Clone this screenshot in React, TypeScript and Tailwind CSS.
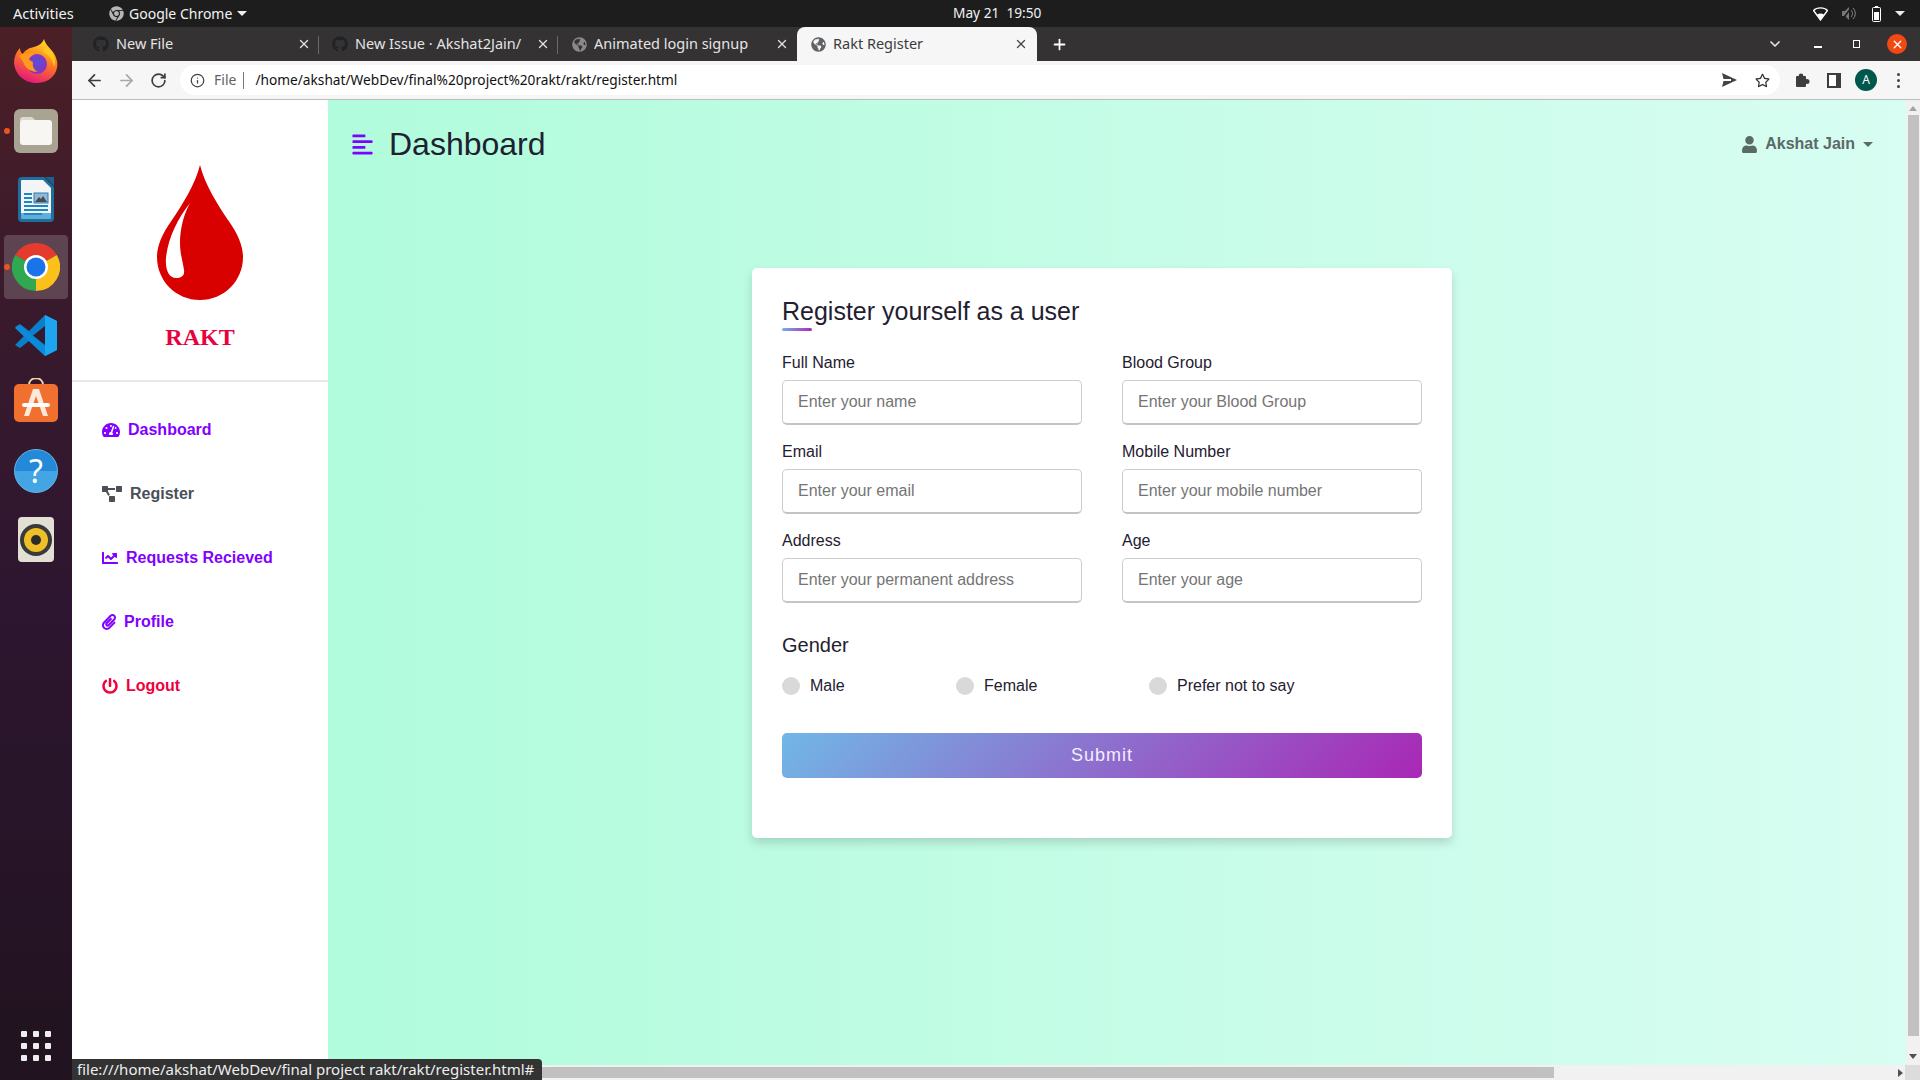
import React from "react";
import {
  FaTachometerAlt, FaProjectDiagram, FaChartLine, FaPaperclip, FaPowerOff, FaUser, FaAlignLeft,
  FaGithub, FaGlobeAmericas, FaChrome, FaRegStar,
} from "react-icons/fa";
import { ArrowLeft, ArrowRight, RotateCw, X, Plus, ChevronDown, Info } from "lucide-react";

const ui = "font-['Noto_Sans',sans-serif]";

function Firefox() {
  return (
    <svg width="46" height="46" viewBox="0 0 46 46">
      <defs>
        <linearGradient id="ff1" x1="0.7" y1="0" x2="0.3" y2="1">
          <stop offset="0" stopColor="#ffe226" />
          <stop offset="0.45" stopColor="#ff7a1f" />
          <stop offset="1" stopColor="#e3127e" />
        </linearGradient>
        <radialGradient id="ff2" cx="0.5" cy="0.4" r="0.6">
          <stop offset="0" stopColor="#5a4fd6" />
          <stop offset="1" stopColor="#8c2fc0" />
        </radialGradient>
      </defs>
      <path d="M31 1c1 5 5 8 9 13 4 6 5 11 4 16-2 9-10 15-21 15C11 45 2 36 1 25c0-6 2-11 6-15 0 3 1 5 3 6 2-4 6-6 11-7 4-1 8-3 10-8z" fill="url(#ff1)" />
      <circle cx="24" cy="26" r="10" fill="url(#ff2)" />
      <path d="M6 18c5-4 11-4 16-2-3 1-5 3-6 5 1 2 3 2 4 3-1 4 1 8 5 10-6 0-12-3-14-8-1-3-3-5-5-8z" fill="#ff9a1f" />
      <path d="M31 1c1 5 5 9 8 13 3 5 4 10 2 15-1-7-5-12-11-15 2-4 2-8 1-13z" fill="#ffc61e" />
    </svg>
  );
}

function Files() {
  return (
    <div className="w-[44px] h-[44px] rounded-[6px] bg-[#a9a391] flex items-center justify-center">
      <svg width="32" height="28" viewBox="0 0 32 28">
        <path d="M0 3a3 3 0 0 1 3-3h9l4 4H0z" fill="#dcd9cf" />
        <rect x="0" y="3" width="32" height="25" rx="3" fill="#f7f6f3" />
      </svg>
    </div>
  );
}

function Writer() {
  return (
    <svg width="36" height="45" viewBox="0 0 36 45">
      <path d="M4 0h22l10 10v31a4 4 0 0 1-4 4H4a4 4 0 0 1-4-4V4a4 4 0 0 1 4-4z" fill="#1f6f9e" />
      <path d="M3 4a1 1 0 0 1 1-1h21l8 8v26H3z" fill="#f2f4f6" />
      <path d="M3 36h30v5a1 1 0 0 1-1 1H4a1 1 0 0 1-1-1z" fill="#5fb0d8" />
      <path d="M27 0l9 0v9z" fill="#18628e" />
      <rect x="6" y="16" width="8" height="2" fill="#1b86c4" />
      <rect x="6" y="20" width="8" height="2" fill="#1b86c4" />
      <rect x="6" y="24" width="8" height="2" fill="#1b86c4" />
      <rect x="6" y="28" width="24" height="2" fill="#1b86c4" />
      <rect x="6" y="32" width="24" height="2" fill="#1b86c4" />
      <rect x="6" y="36" width="18" height="2" fill="#1b86c4" />
      <rect x="16" y="16" width="14" height="10" fill="#8fb8d6" stroke="#2a7fb0" />
      <path d="M17 25l4-5 2 2 2-3 4 6z" fill="#4a4a4a" />
    </svg>
  );
}

function Chrome() {
  return (
    <svg width="48" height="48" viewBox="0 0 48 48">
      <path d="M24 24L44.8 12A24 24 0 0 0 3.2 12z" fill="#e33b2e" />
      <path d="M24 24L3.2 12A24 24 0 0 0 24 48z" fill="#2fa84f" />
      <path d="M24 24L24 48A24 24 0 0 0 44.8 12z" fill="#fcc01a" />
      <circle cx="24" cy="24" r="12" fill="#fff" />
      <circle cx="24" cy="24" r="9.5" fill="#1a73e8" />
    </svg>
  );
}

function VSCode() {
  return (
    <svg width="44" height="43" viewBox="0 0 44 43">
      <path d="M31 1l12 6v29l-12 6-16-15-9 7-5-3 9-9-9-9 5-3 9 7z" fill="#0b7fcb" />
      <path d="M31 1l12 6v29l-12 6z" fill="#1ea5ef" />
      <path d="M31 12L19 21.500 31 31z" fill="#331a30" />
      <path d="M1 14l5-3 25 21v10z" fill="#0a8ad8" />
    </svg>
  );
}

function Store() {
  return (
    <svg width="44" height="44" viewBox="0 0 44 44">
      <path d="M15 7c0-9 14-9 14 0" fill="none" stroke="#f4d3a8" strokeWidth="2" />
      <rect x="0" y="6" width="44" height="38" rx="5" fill="#f1702f" />
      <path d="M19 11h6l9 27h-5l-7-20-7 20h-5z" fill="#fde9dc" />
      <rect x="8" y="25" width="28" height="4" rx="2" fill="#fff" />
    </svg>
  );
}

function Help() {
  return (
    <div className="w-[44px] h-[44px] rounded-full bg-[linear-gradient(#2389d8_50%,#43a5e3_50%)] border border-[#63b6ea] flex items-center justify-center text-white text-[32px] leading-none font-['Noto_Sans',sans-serif]">
      ?
    </div>
  );
}

function Rhythmbox() {
  return (
    <div className="w-[36px] h-[45px] rounded-[4px] bg-[#e2dfd5] flex items-center justify-center">
      <svg width="32" height="32" viewBox="0 0 32 32">
        <circle cx="16" cy="16" r="16" fill="#3a3a3a" />
        <circle cx="16" cy="16" r="12" fill="#eebf26" />
        <circle cx="16" cy="16" r="5" fill="#2c2c2c" />
      </svg>
    </div>
  );
}

function Dock() {
  return (
    <div className="w-[72px] shrink-0 flex flex-col items-center bg-[linear-gradient(#4c1f26_0%,#3a1a2c_25%,#2d1630_55%,#21131f_100%)] relative">
      <div className="h-[58px] mt-[5px] flex items-center justify-center"><Firefox /></div>
      <div className="h-[44px] mt-[19px] flex items-center justify-center"><Files /></div>
      <div className="h-[45px] mt-[24px] flex items-center justify-center"><Writer /></div>
      <div className="w-[64px] h-[64px] mt-[13px] rounded-[4px] bg-[#5e4450] flex items-center justify-center"><Chrome /></div>
      <div className="h-[43px] mt-[15px] flex items-center justify-center"><VSCode /></div>
      <div className="h-[44px] mt-[21px] flex items-center justify-center"><Store /></div>
      <div className="h-[44px] mt-[27px] flex items-center justify-center"><Help /></div>
      <div className="h-[45px] mt-[24px] flex items-center justify-center"><Rhythmbox /></div>
      <span className="absolute left-[4px] top-[101px] w-[6px] h-[6px] rounded-full bg-[#e95420]" />
      <span className="absolute left-[4px] top-[237px] w-[6px] h-[6px] rounded-full bg-[#e95420]" />
      <div className="mt-auto mb-[19px] grid grid-cols-3 gap-x-[6px] gap-y-[6px]">
        {Array.from({ length: 9 }).map((_, i) => (
          <span key={i} className="w-[6px] h-[6px] rounded-[1px] bg-[#eeeeee]" />
        ))}
      </div>
    </div>
  );
}

function TopBar() {
  return (
    <div className={`${ui} h-[27px] shrink-0 bg-[#1d1d1d] flex items-center text-[14px] text-[#f2f2f2] relative`}>
      <span className="ml-[13px] w-[96px] text-[14.6px]">Activities</span>
      <FaChrome className="w-[15px] h-[15px] text-[#b5b5b5]" />
      <span className="ml-[5px]">Google Chrome</span>
      <span className="ml-[5px] w-0 h-0 border-x-[5px] border-x-transparent border-t-[5px] border-t-[#eee]" />
      <span className="absolute left-[953px] top-[3px] text-[13.7px]">May 21&nbsp;&nbsp;19:50</span>
      <div className="ml-auto mr-[15px] flex items-center">
        <svg width="15" height="15" viewBox="0 0 15 15">
          <path d="M0.500 4.500C4 1 11 1 14.500 4.500L7.500 14z" fill="none" stroke="#fff" strokeWidth="1.400" />
          <path d="M4 8.500C6 7 9 7 11 8.500L7.500 14z" fill="#fff" />
        </svg>
        <svg className="ml-[13px]" width="15" height="15" viewBox="0 0 15 15">
          <path d="M1 5h3l4-4v13l-4-4H1z" fill="#777" />
          <path d="M10 4c2 2 2 5 0 7M12 2c3 3 3 8 0 11" stroke="#888" fill="none" />
          <path d="M1 14L10 2" stroke="#1d1d1d" strokeWidth="1.500" />
        </svg>
        <svg className="ml-[16px]" width="9" height="16" viewBox="0 0 9 16">
          <rect x="0.500" y="1.500" width="8" height="14" rx="1" fill="none" stroke="#fff" />
          <rect x="3" y="0" width="3" height="2" fill="#fff" />
          <rect x="2" y="6" width="5" height="8" fill="#fff" />
        </svg>
        <span className="ml-[14px] w-0 h-0 border-x-[5px] border-x-transparent border-t-[5px] border-t-[#eee]" />
      </div>
    </div>
  );
}

function Tab({ title, icon, active, sep }: { title: string; icon: React.ReactNode; active?: boolean; sep?: boolean }) {
  return (
    <div className={`relative h-full flex items-center pl-[13px] text-[14.5px] ${active ? "w-[240px] pr-[9px] bg-[#f6f6f6] text-[#3c3c3c] rounded-t-[8px]" : "w-[239px] pr-[8px] text-[#e4e4e4]"}`}>
      <span className="w-[16px] h-[16px] flex items-center justify-center shrink-0">{icon}</span>
      <span className="ml-[7px] mt-[-1px] flex-1 overflow-hidden whitespace-nowrap">{title}</span>
      <X className={`ml-[6px] w-[14px] h-[14px] shrink-0 ${active ? "text-[#444]" : "text-[#e4e4e4]"}`} strokeWidth={2.200} />
      {sep && <span className="absolute right-0 top-[9px] h-[18px] w-px bg-[#6a6a6a]" />}
    </div>
  );
}

function TabStrip() {
  return (
    <div className={`${ui} h-[34px] shrink-0 bg-[#343233] flex items-stretch`}>
      <div className="w-[8px]" />
      <Tab title="New File" sep icon={<FaGithub className="w-[16px] h-[16px] text-[#202326]" />} />
      <Tab title="New Issue · Akshat2Jain/" sep icon={<FaGithub className="w-[16px] h-[16px] text-[#202326]" />} />
      <Tab title="Animated login signup" icon={<FaGlobeAmericas className="w-[15px] h-[15px] text-[#8a8a8a]" />} />
      <Tab title="Rakt Register" active icon={<FaGlobeAmericas className="w-[15px] h-[15px] text-[#5f6368]" />} />
      <div className="w-[44px] flex items-center justify-center">
        <Plus className="w-[17px] h-[17px] text-white" strokeWidth={2.500} />
      </div>
      <div className="ml-auto flex items-center text-[#e6e6e6]">
        <ChevronDown className="w-[16px] h-[16px]" strokeWidth={2.500} />
        <span className="ml-[31px] w-[8px] h-[2px] mt-[5px] bg-white" />
        <span className="ml-[31px] w-[7px] h-[8px] border border-white" />
        <span className="ml-[27px] mr-[13px] w-[20px] h-[20px] rounded-full bg-[#f04a12] flex items-center justify-center">
          <X className="w-[13px] h-[13px] text-white" strokeWidth={2.500} />
        </span>
      </div>
    </div>
  );
}

function Toolbar() {
  return (
    <div className={`${ui} h-[39px] shrink-0 bg-[#f6f6f6] border-b border-[#bdbdbd] flex items-center`}>
      <ArrowLeft className="ml-[13px] w-[19px] h-[19px] text-[#3d3d3d]" strokeWidth={2.200} />
      <ArrowRight className="ml-[13px] w-[19px] h-[19px] text-[#a8a8a8]" strokeWidth={2.200} />
      <RotateCw className="ml-[14px] w-[17px] h-[17px] text-[#3d3d3d]" strokeWidth={2.400} />
      <div className="ml-[13px] w-[1600px] h-[30px] rounded-full bg-white flex items-center pl-[10px]">
        <Info className="w-[15px] h-[15px] text-[#444]" />
        <span className="ml-[9px] mt-[-1px] text-[14px] text-[#5f6368]">File</span>
        <span className="ml-[7px] w-px h-[17px] bg-[#777]" />
        <span className="ml-[11px] text-[13.7px] text-[#111]">/home/akshat/WebDev/final%20project%20rakt/rakt/register.html</span>
        <svg className="ml-auto" width="15" height="14" viewBox="0 0 15 14">
          <path d="M0 0l15 7-15 7 1.500-6H9V6H1.500z" fill="#444" />
        </svg>
        <FaRegStar className="ml-[18px] mr-[10px] w-[15px] h-[15px] text-[#333]" />
      </div>
      <svg className="ml-[15px]" width="15" height="15" viewBox="0 0 15 15">
        <rect x="1" y="3" width="10" height="11" rx="1" fill="#3d3d3d" />
        <circle cx="6" cy="2.800" r="2.300" fill="#3d3d3d" />
        <circle cx="12" cy="8.500" r="2.500" fill="#3d3d3d" />
      </svg>
      <svg className="ml-[17px]" width="14" height="15" viewBox="0 0 14 15">
        <rect x="1" y="1" width="12" height="13" fill="#fff" stroke="#3d3d3d" strokeWidth="2" />
        <rect x="9" y="1" width="5" height="13" fill="#3d3d3d" />
      </svg>
      <span className="ml-[14px] w-[22px] h-[22px] rounded-full bg-[#00574b] text-white text-[12px] flex items-center justify-center">A</span>
      <div className="ml-[20px] flex flex-col gap-[3px]">
        <span className="w-[3px] h-[3px] rounded-full bg-[#444]" />
        <span className="w-[3px] h-[3px] rounded-full bg-[#444]" />
        <span className="w-[3px] h-[3px] rounded-full bg-[#444]" />
      </div>
    </div>
  );
}

function Drop() {
  return (
    <svg width="86" height="135" viewBox="157 165 86 135">
      <path d="M200 165C205 185 218 205 228 220C238 234 243 246 243 257C243 281 224 300 200 300C176 300 157 281 157 257C157 246 162 234 172 220C182 205 195 185 200 165Z" fill="#d90000" />
      <path d="M190 203C178 218 168 238 166 258C165 270 169 278 176 278C181 278 185 276 184 270C183 262 180 254 180 243C180 228 184 214 190 203Z" fill="#fff" />
    </svg>
  );
}

function NavItem({ icon, label, color, gap }: { icon: React.ReactNode; label: string; color: string; gap: string }) {
  return (
    <div className={`h-[64px] pl-[30px] flex items-center font-bold text-[16px] ${color} ${gap}`}>
      {icon}
      <span>{label}</span>
    </div>
  );
}

function Sidebar() {
  return (
    <div className="w-[256px] shrink-0 bg-white flex flex-col">
      <div className="h-[282px] shrink-0 border-b-2 border-[#e7e7e7] flex flex-col items-center pt-[65px]">
        <Drop />
        <div className="mt-[22px] font-['Liberation_Serif',serif] font-bold text-[24px] leading-[30px] text-[#e8003f]">RAKT</div>
      </div>
      <div className="pt-[16px] flex flex-col font-['Liberation_Sans',sans-serif]">
        <NavItem color="text-[#8200ff]" gap="gap-[8px]" label="Dashboard" icon={<FaTachometerAlt className="w-[18px] h-[16px]" />} />
        <NavItem color="text-[#495057]" gap="gap-[8px]" label="Register" icon={<FaProjectDiagram className="w-[20px] h-[16px]" />} />
        <NavItem color="text-[#8200ff]" gap="gap-[8px]" label="Requests Recieved" icon={<FaChartLine className="w-[16px] h-[16px]" />} />
        <NavItem color="text-[#8200ff]" gap="gap-[8px]" label="Profile" icon={<FaPaperclip className="w-[14px] h-[16px]" />} />
        <NavItem color="text-[#f0003c]" gap="gap-[8px]" label="Logout" icon={<FaPowerOff className="w-[16px] h-[16px]" />} />
      </div>
    </div>
  );
}

function Field({ label, placeholder }: { label: string; placeholder: string }) {
  return (
    <div className="w-[300px] flex flex-col">
      <label className="h-[24px] mb-[6px] pt-[1px] text-[16px] leading-[24px] text-[#1f2030]">{label}</label>
      <input
        readOnly
        placeholder={placeholder}
        className="h-[45px] w-full rounded-[5px] border border-[#cccccc] border-b-2 border-b-[#c4c4c4] bg-white pl-[15px] text-[16px] placeholder:text-[#757575] outline-none"
      />
    </div>
  );
}

function Radio({ label, width }: { label: string; width: string }) {
  return (
    <div className={`flex items-center ${width}`}>
      <span className="w-[18px] h-[18px] rounded-full bg-[#d9d9d9]" />
      <span className="ml-[10px] text-[16px] text-[#1f2030]">{label}</span>
    </div>
  );
}

function Card() {
  return (
    <div className="ml-[424px] mt-[80px] w-[700px] h-[570px] shrink-0 rounded-[5px] bg-white shadow-[0_5px_10px_rgba(0,0,0,0.15)] px-[30px] pt-[27px] font-['Liberation_Sans',sans-serif]">
      <div className="h-[33px] text-[25px] leading-[33px] text-[#1f2030]">Register yourself as a user</div>
      <div className="h-[3px] w-[30px] rounded-[2px] bg-[linear-gradient(135deg,#71b7e6,#a927b5)]" />
      <div className="mt-[19px] grid grid-cols-[300px_300px] gap-x-[40px] gap-y-[14px]">
        <Field label="Full Name" placeholder="Enter your name" />
        <Field label="Blood Group" placeholder="Enter your Blood Group" />
        <Field label="Email" placeholder="Enter your email" />
        <Field label="Mobile Number" placeholder="Enter your mobile number" />
        <Field label="Address" placeholder="Enter your permanent address" />
        <Field label="Age" placeholder="Enter your age" />
      </div>
      <div className="mt-[29px] h-[26px] text-[20px] leading-[26px] text-[#1f2030]">Gender</div>
      <div className="mt-[16px] h-[24px] flex items-center">
        <Radio label="Male" width="w-[174px]" />
        <Radio label="Female" width="w-[193px]" />
        <Radio label="Prefer not to say" width="" />
      </div>
      <div className="mt-[35px] h-[45px] w-[640px] rounded-[5px] bg-[linear-gradient(135deg,#71b7e6,#a927b5)] flex items-center justify-center text-[18px] tracking-[1px] text-[#f3edff]">
        Submit
      </div>
    </div>
  );
}

function VScroll() {
  return (
    <div className="w-[14px] shrink-0 bg-[#f1f1f1] flex flex-col items-center">
      <span className="mt-[6px] w-0 h-0 border-x-[4px] border-x-transparent border-b-[5px] border-b-[#a3a3a3]" />
      <span className="mt-[4px] w-[11px] h-[921px] bg-[#c1c1c1]" />
      <span className="mt-[18px] w-0 h-0 border-x-[4px] border-x-transparent border-t-[5px] border-t-[#505050]" />
    </div>
  );
}

function HScroll() {
  return (
    <div className="h-[15px] shrink-0 bg-[#f1f1f1] flex items-center">
      <span className="ml-[400px] w-[1082px] h-[11px] bg-[#c1c1c1]" />
      <span className="ml-[344px] w-0 h-0 border-y-[4px] border-y-transparent border-l-[5px] border-l-[#505050]" />
      <span className="ml-auto w-[15px] h-[15px] bg-[#dcdcdc]" />
    </div>
  );
}

export default function App() {
  return (
    <div className="w-[1920px] h-[1080px] flex flex-col overflow-hidden relative">
      <TopBar />
      <div className="flex-1 min-h-0 flex">
        <Dock />
        <div className="flex-1 min-w-0 flex flex-col">
          <TabStrip />
          <Toolbar />
          <div className="flex-1 min-h-0 flex">
            <Sidebar />
            <div className="flex-1 min-w-0 bg-linear-to-r from-[#b0fcdc] to-[#d8fdf2] flex flex-col font-['Liberation_Sans',sans-serif]">
              <div className="h-[88px] shrink-0 flex items-center pl-[23px] pr-[33px]">
                <FaAlignLeft className="w-[23px] h-[23px] text-[#8200ff]" />
                <span className="ml-[15px] text-[32px] text-[#1f2030]">Dashboard</span>
                <div className="ml-auto flex items-center font-bold text-[16px] text-[#5a6a66]">
                  <FaUser className="w-[15px] h-[17px]" />
                  <span className="ml-[8px]">Akshat Jain</span>
                  <span className="ml-[8px] w-0 h-0 border-x-[5px] border-x-transparent border-t-[5px] border-t-[#5a6a66]" />
                </div>
              </div>
              <Card />
            </div>
            <VScroll />
          </div>
          <HScroll />
        </div>
      </div>
      <div className={`${ui} absolute left-[72px] bottom-0 h-[21px] w-[470px] bg-[#333333] rounded-tr-[4px] text-[15px] leading-[20px] text-[#eeeeee] pl-[5px] whitespace-nowrap overflow-hidden`}>
        file:///home/akshat/WebDev/final project rakt/rakt/register.html#
      </div>
    </div>
  );
}
